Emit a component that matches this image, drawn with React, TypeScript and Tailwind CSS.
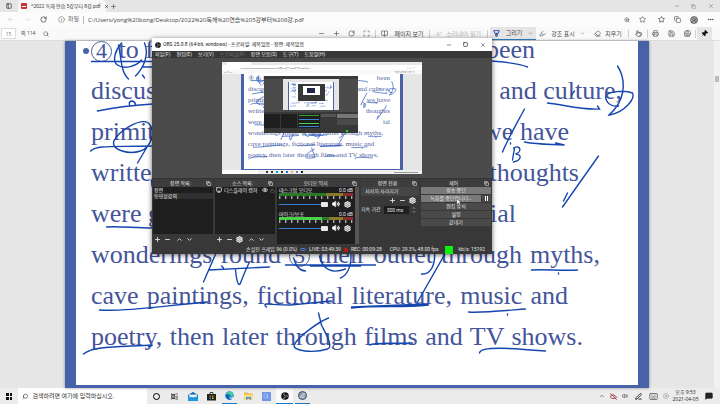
import type { ReactNode } from "react";
import {
  ArrowLeft,
  ArrowRight,
  BookOpen,
  ChevronDown,
  ChevronUp,
  CircleUserRound,
  CloudOff,
  Copy,
  Eraser,
  Eye,
  Highlighter,
  Info,
  Keyboard,
  Lock,
  MessageSquareText,
  Minus,
  Monitor,
  MoreHorizontal,
  PanelLeft,
  PenLine,
  Pin,
  Plus,
  Pointer,
  Printer,
  RotateCw,
  Save,
  SaveAll,
  Scan,
  Search,
  Settings,
  Square,
  Star,
  Volume2,
  X,
  XCircle,
  ZoomIn,
} from "lucide-react";

// Each line keeps the words on the left and right of the page
type Line = { left: ReactNode; right?: string; width: string; mini: string };

const Circled = ({ n }: { n: string }) => (
  <span className="inline-flex size-[21px] items-center justify-center rounded-full border border-[#4a5c9c] text-[22px] leading-none">
    {n}
  </span>
);

const LINES: Line[] = [
  {
    left: (
      <>
        <Circled n="4" /> to f
      </>
    ),
    right: "been",
    width: "w-[444px]",
    mini: "④ to f",
  },
  { left: "discus", right: "and culture,", width: "w-[531px]", mini: "discus" },
  { left: "primit", right: "we have", width: "w-[478px]", mini: "primit" },
  { left: "writte", right: "thoughts", width: "w-[488px]", mini: "writte" },
  { left: "were g", right: "ial", width: "w-[425px]", mini: "were g" },
  {
    left: (
      <>
        wonderings found <Circled n="5" /> their outlet through myths,
      </>
    ),
    width: "w-[509px]",
    mini: "wonderings found ⑤ their outlet through myths,",
  },
  {
    left: "cave paintings, fictional literature, music and",
    width: "w-[477px]",
    mini: "cave paintings, fictional literature, music and",
  },
  {
    left: "poetry, then later through films and TV shows.",
    width: "w-[492px]",
    mini: "poetry, then later through films and TV shows.",
  },
];

const STROKES = [
  "M91 61.5H152M142 67h10",
  "M121 43C115 50 111 61 117 65C124 70 136 66 141 60",
  "M118 45C121 58 120 72 128 79",
  "M144 43C149 55 143 68 135 76M142 75l2 3",
  "M97 111C115 107 135 105 152 104M129 105q-1-4 3-4q3 1 3 4",
  "M90 151C97 145 110 147 152 146",
  "M113 142C118 130 140 118 148 123C156 132 150 148 140 151C128 155 112 150 113 142M152 138L137 163",
  "M151 180q0 6 2 10M106 227C115 226 135 228 152 228",
  "M203 282L216 252M208 270L269 267M221 266l2 2M235 270C236 280 238 288 240 283C243 275 246 268 249 262",
  "M285 265H375M310 266h50M293 258C296 268 300 271 305 271",
  "M319 256C322 270 332 274 345 269M350 252C352 262 348 275 340 278",
  "M99 310C125 312 160 306 207 302",
  "M266 307C261 302 268 305 290 305L331 301",
  "M351 308C380 305 400 308 428 305M351 307L427 304M445 253L417 302M434 252C435 265 430 275 421 274",
  "M83 354C92 346 115 347 152 345l-4 2",
  "M318 313L321 325C326 335 333 347 327 349C315 353 290 352 294 344C300 335 318 322 328 318",
  "M531 270C545 269 560 271 577 270M558 273v1",
  "M468 312C480 313 500 311 525 309M507 314v1",
  "M369 345C375 342 390 344 412 343",
  "M479 353C480 346 510 348 545 351",
  "M490 61C505 62 520 64 527 67",
  "M547 103C565 105 580 110 599 109l-2-3M571 95l3-4",
  "M617 66C625 78 625 95 615 108C610 115 606 116 609 115C625 112 635 98 632 93C625 90 606 91 605 97C606 104 612 107 618 106",
  "M524 109C516 124 508 138 502 152M510 143v1",
  "M514 148L512 160M513 148C520 144 522 152 515 154C521 154 522 160 513 162",
  "M524 142C540 145 550 144 564 145l-9-2",
  "M598 156L562 207M567 193L563 201",
];

const Strokes = ({ weight = 1.4 }: { weight?: number }) => (
  <svg
    viewBox="65 41 583 347"
    className="pointer-events-none absolute inset-0 h-full w-full"
    fill="none"
    stroke="#1546b0"
    strokeWidth={weight}
    strokeLinecap="round"
    aria-hidden="true"
  >
    {STROKES.map((d) => (
      <path key={d} d={d} />
    ))}
  </svg>
);

const EdgeLogo = ({ className }: { className: string }) => (
  <svg viewBox="0 0 20 20" className={className} aria-hidden="true">
    <circle cx="10" cy="10" r="9.5" fill="#1478c8" />
    <path d="M1 9C2 2 12-2 17 4c4 5 2 9-3 9-3 0-2-1-2-3 0-4-8-5-11-1z" fill="#45cda0" />
    <path d="M7 10c-2 5 3 9 9 7-7 5-15-1-13-7 1-2 3-2 4 0z" fill="#0c56a5" />
    <path d="M8 10c-1 3 2 6 6 5 3-1 5-3 5-3l-1 4c-5 3-11 0-10-6z" fill="#fff" />
  </svg>
);

const ObsLogo = ({ className }: { className: string }) => (
  <svg viewBox="0 0 20 20" className={className} aria-hidden="true">
    <circle cx="10" cy="10" r="9.5" fill="#151515" />
    <g fill="none" stroke="#ddd" strokeWidth="1.6">
      <path d="M10 9C6 8 6 4 9 3M11 10c3-3 6-1 6 2M10 11c1 4-2 6-5 4" />
    </g>
  </svg>
);

const Divider = () => <span className="h-2 w-px bg-[#cfcfcf]" />;

const BrowserTop = () => (
  <header className="text-[#444]">
    <div className="flex h-3 items-center bg-[#e5e5e5]">
      <button aria-label="탭 작업" className="flex w-[18px] justify-center">
        <PanelLeft className="size-[6px]" strokeWidth={3} />
      </button>
      <div className="flex h-full w-[88px] items-center gap-1 rounded-t-sm bg-[#f8f8f8] pl-[3px]">
        <span className="flex h-[6px] w-[6px] shrink-0 items-center justify-center rounded-[1px] bg-[#c9303a]">
          <span className="h-px w-[4px] bg-white" />
        </span>
        <span className="font-[Roboto,'Noto_Sans_CJK_KR',sans-serif] text-[5px] leading-none whitespace-nowrap">
          *2022 독해 연습 5강부터 8강.pdf
        </span>
        <button aria-label="탭 닫기" className="mr-px ml-auto">
          <X className="size-[5px]" strokeWidth={3} />
        </button>
      </div>
      <button aria-label="새 탭" className="ml-1">
        <Plus className="size-[7px]" />
      </button>
      <div className="ml-auto flex w-[52px] items-center justify-around text-[#777]">
        <button aria-label="최소화"><Minus className="size-[6px]" /></button>
        <button aria-label="이전 크기로"><Copy className="size-[5px]" /></button>
        <button aria-label="닫기"><X className="size-[6px]" /></button>
      </div>
    </div>

    <div className="flex h-[15px] items-center bg-[#fcfcfc] pr-[6px]">
      <div className="flex w-[53px] items-center justify-between pr-[6px] pl-[7px]">
        <ArrowLeft className="size-[7px] text-[#ccc]" />
        <ArrowRight className="size-[7px] text-[#ddd]" />
        <button aria-label="새로 고침">
          <RotateCw className="size-[7px]" strokeWidth={2.5} />
        </button>
      </div>
      <Info className="ml-[5px] size-[7px] text-[#777]" />
      <label htmlFor="address" className="ml-[3px] text-[6px] text-[#666]">파일</label>
      <span className="mx-1 h-2 w-px bg-[#bbb]" />
      <input
        id="address"
        className="min-w-0 flex-1 bg-transparent text-[6px] leading-[10px] outline-none"
        defaultValue="C:/Users/yong%20bong/Desktop/2022%20독해%20연습%205강부터%208강.pdf"
      />
      <div className="flex items-center gap-[9px]">
        <ZoomIn className="size-[6px]" />
        <Star className="size-[7px]" />
        <Star className="ml-[3px] size-[7px]" strokeWidth={2.5} />
        <Copy className="size-[7px]" />
        <CircleUserRound className="size-[8px] rounded-full bg-[#bbb]" />
        <button aria-label="설정 및 기타">
          <MoreHorizontal className="size-[7px]" strokeWidth={3} />
        </button>
      </div>
    </div>

    <div className="flex h-[14px] items-center border-b border-[#ddd] bg-[#f9f9f9] pr-2 text-[6px] leading-none">
      <input
        id="page"
        className="ml-px h-[11px] w-[15px] border border-[#ddd] bg-white text-center text-[5px] text-[#777] outline-none"
        defaultValue="15"
      />
      <label htmlFor="page" className="ml-[5px] text-[5px]">의 114</label>
      <button aria-label="찾기" className="ml-2">
        <Search className="size-[6px]" />
      </button>

      <div className="ml-auto flex h-full items-center whitespace-nowrap">
        <div className="flex items-center gap-2 pr-[5px]">
          <button aria-label="축소"><Minus className="size-[7px]" /></button>
          <button aria-label="확대"><Plus className="size-[7px]" /></button>
          <button aria-label="회전"><RotateCw className="size-[7px]" /></button>
          <button aria-label="페이지에 맞춤"><Scan className="size-[7px]" /></button>
        </div>
        <Divider />
        <button className="flex w-[53px] items-center justify-center gap-[6px]">
          <BookOpen className="size-[7px]" />
          페이지 보기
        </button>
        <Divider />
        <button className="flex w-[57px] items-center justify-center gap-1 text-[#bbb]">
          <span>A&quot;</span>
          소리내어 읽기
        </button>
        <Divider />
        <button className="ml-[2px] flex h-full w-[46px] items-center justify-around border-b border-[#2b7fc4] bg-[#e5e5e5]">
          <svg viewBox="0 0 10 10" className="size-[7px]" aria-hidden="true">
            <path d="M1 1h8L6 7v2H4V7z" fill="#fff" stroke="#26479c" strokeWidth="1.4" />
            <path d="M3 4h4L5 8z" fill="#26479c" />
          </svg>
          그리기
          <ChevronDown className="size-[5px]" />
        </button>
        <button className="flex w-[52px] items-center justify-around">
          <Highlighter className="size-[7px]" />
          강조 표시
          <ChevronDown className="size-[5px]" />
        </button>
        <button className="flex w-[40px] items-center justify-center gap-1">
          <Eraser className="size-[7px]" />
          지우기
        </button>
        <Divider />
        <button aria-label="손 도구" className="flex w-[18px] justify-center">
          <Pointer className="size-[7px]" />
        </button>
        <Divider />
        <div className="flex w-[47px] items-center justify-around">
          <button aria-label="인쇄"><Printer className="size-[7px]" /></button>
          <button aria-label="저장"><Save className="size-[7px]" /></button>
          <button aria-label="다른 이름으로 저장"><SaveAll className="size-[7px]" /></button>
        </div>
        <Divider />
        <button aria-label="도구 모음 고정" className="ml-px flex h-full w-[15px] items-center justify-center bg-[#e5e5e5]">
          <Pin className="size-[7px] rotate-45 fill-black text-black" />
        </button>
      </div>
    </div>
  </header>
);

const DockTitle = ({ children }: { children: ReactNode }) => (
  <h2 className="flex h-[8px] items-center bg-[#3d3d3d] px-[2px] text-[5px] leading-none">
    <span className="flex-1 text-center">{children}</span>
    <Copy className="size-[5px]" strokeWidth={3} />
  </h2>
);

const ListTools = ({ withGear = false }: { withGear?: boolean }) => (
  <div className="flex h-[11px] items-center gap-[3px] pl-px">
    <button aria-label="추가"><Plus className="size-[7px]" strokeWidth={3} /></button>
    <button aria-label="제거"><Minus className="size-[7px]" strokeWidth={3} /></button>
    {withGear && (
      <button aria-label="속성"><Settings className="size-[7px]" strokeWidth={4} /></button>
    )}
    <button aria-label="위로" className="ml-[2px]"><ChevronUp className="size-[7px]" strokeWidth={3} /></button>
    <button aria-label="아래로"><ChevronDown className="size-[7px]" strokeWidth={3} /></button>
  </div>
);

const Channel = ({ name, live }: { name: string; live: boolean }) => (
  <div className="px-[2px]">
    <div className="flex h-[6px] items-center justify-between text-[5px] leading-none">
      <span>{name}</span>
      <span>0.0 dB</span>
    </div>
    <div className="flex h-[3px]">
      <span className={live ? "w-[58%] bg-[#4bd14b]" : "w-[64%] bg-[#287a28]"} />
      {live && <span className="w-[10%] bg-[#287a28]" />}
      <span className="flex-1 bg-[#8a7a28]" />
      <span className="w-[14%] bg-[#8e2b2b]" />
    </div>
    <div className="flex h-[4px] justify-between">
      {[60, 55, 50, 45, 40, 35, 30, 25, 20, 15, 10, 5, 0].map((db) => (
        <span key={db} className="h-[3px] w-[2px] border-l border-[#aaa] bg-[#555]" />
      ))}
    </div>
    <div className="flex h-[8px] items-center gap-1 pr-[2px]">
      <input
        type="range"
        aria-label={name}
        defaultValue={100}
        className="h-[6px] w-full min-w-0 appearance-none bg-transparent [&::-webkit-slider-runnable-track]:h-px [&::-webkit-slider-runnable-track]:bg-[#3a82d8] [&::-webkit-slider-thumb]:-mt-[2px] [&::-webkit-slider-thumb]:h-[5px] [&::-webkit-slider-thumb]:w-[7px] [&::-webkit-slider-thumb]:appearance-none [&::-webkit-slider-thumb]:rounded-[1px] [&::-webkit-slider-thumb]:bg-[#e8e8e8]"
      />
      <button aria-label="음소거"><Volume2 className="size-[8px] fill-white" strokeWidth={3} /></button>
      <button aria-label="오디오 설정"><Settings className="size-[7px]" strokeWidth={4} /></button>
    </div>
  </div>
);

// Small copy of the captured display, with the capture window repeated inside
const Preview = () => (
  <div className="relative flex h-[112px] w-[200px] flex-col overflow-hidden bg-[#e6e6e6]">
    <div className="h-[3px] bg-[#e8e8e8] px-[5px]">
      <div className="h-full w-6 bg-white" />
    </div>
    <div className="flex h-[5px] items-center gap-1 bg-white px-[6px] text-[2px] leading-none text-[#555]">
      <span className="flex-1 pl-3">C:/Users/yong%20bong/Desktop/2022%20독해%20연습%205강부터%208강.pdf</span>
      <span>☆ ☆ ◎ ⋯</span>
    </div>
    <div className="flex h-[4px] items-center bg-[#f9f9f9] pl-[2px] text-[2px] leading-none text-[#555]">
      <span className="flex-1">15 의 114</span>
      <span className="pr-2">그리기 강조 표시 지우기</span>
    </div>
    <div className="flex min-h-0 flex-1 justify-center">
      <div className="relative w-[162px] overflow-hidden border-x-[3px] border-b border-[#4762a9] bg-white">
        <div className="-mt-px ml-1 font-['Liberation_Serif',serif] text-[7px] leading-[11px] text-[#5566a5]">
          {LINES.map((line) => (
            <p key={line.mini} className={line.right ? "flex w-[142px] justify-between whitespace-nowrap" : "whitespace-nowrap"}>
              <span>{line.mini}</span>
              <span>{line.right}</span>
            </p>
          ))}
        </div>
        <Strokes weight={2.4} />
      </div>
    </div>
    <div className="flex h-[4px] items-center justify-between bg-[#efefef] pr-1">
      <span className="h-full w-9 bg-white" />
      <span className="mr-auto ml-2 flex gap-[3px]">
        <span className="size-[2px] bg-[#333]" />
        <span className="size-[2px] bg-[#333]" />
        <span className="size-[2px] bg-[#1690d8]" />
        <span className="size-[2px] bg-[#333]" />
        <span className="size-[2px] bg-[#1478c8]" />
        <span className="size-[2px] bg-[#e6b84a]" />
        <span className="size-[2px] bg-[#5a80d8]" />
        <span className="size-[2px] bg-[#151515]" />
      </span>
      <span className="h-px w-6 bg-[#999]" />
    </div>
    <div className="absolute top-[11px] left-[42px] flex h-[60px] w-[94px] flex-col bg-[#4b4b4b]">
      <div className="h-[3px] bg-white" />
      <div className="h-[3px] bg-[#3a3a3a]" />
      <div className="ml-[19px] flex h-[31px] w-[56px] justify-center bg-[#e6e6e6] pt-[3px]">
        <div className="relative flex w-[46px] justify-center border-x border-[#4762a9] bg-white">
          <Strokes weight={5} />
          <div className="relative mt-[2px] h-[17px] w-[27px] bg-[#383838] px-[5px] pt-[2px]">
            <div className="flex h-[9px] justify-center bg-white pt-[2px]">
              <span className="h-[5px] w-[8px] bg-[#22264a]" />
            </div>
          </div>
        </div>
      </div>
      <div className="mt-[2px] flex flex-1 gap-px bg-[#383838] pt-[2px]">
        <span className="h-[14px] w-[16px] bg-[#1e1e1e]" />
        <span className="h-[14px] w-[16px] bg-[#1e1e1e]" />
        <span className="flex h-[14px] w-[22px] flex-col gap-[3px] bg-[#1e1e1e] p-px">
          <span className="h-px bg-[#36a036]" />
          <span className="h-px bg-[#3a82d8]" />
          <span className="h-px bg-[#4bd14b]" />
          <span className="h-px bg-[#3a82d8]" />
        </span>
        <span className="h-[3px] w-[15px] bg-[#555]" />
        <span className="flex flex-1 flex-col gap-px">
          <span className="h-[4px] bg-[#777]" />
          <span className="h-[6px] bg-[#4a4a4a]" />
        </span>
      </div>
      <div className="flex h-[4px] items-center justify-end bg-[#383838] pr-[10px]">
        <span className="size-[2px] bg-[#0ef010]" />
      </div>
    </div>
  </div>
);

const MENU = ["파일(F)", "편집(E)", "보기(V)", "프로파일(P)", "장면 모음(S)", "도구(T)", "도움말(H)"];

const BTN = "h-[7px] w-full bg-[#4a4a4a] text-[5px] leading-none";
const BTN_ON = "h-[7px] w-full bg-[#797979] text-[5px] leading-none";

const ObsWindow = () => (
  <section
    aria-label="OBS"
    className="absolute top-[38px] left-[152px] flex w-[340px] flex-col bg-[#383838] font-[Roboto,'Noto_Sans_CJK_KR',sans-serif] text-[#e4e4e4] shadow-[0_1px_5px_rgba(0,0,0,0.6)]"
  >
    <div className="flex h-[13px] items-center bg-white pl-[3px] text-[#222]">
      <ObsLogo className="size-[6px]" />
      <h1 className="ml-[2px] text-[5px] leading-none whitespace-nowrap">
        OBS 25.0.8 (64-bit, windows) - 프로파일: 제목없음 - 장면: 제목없음
      </h1>
      <div className="ml-auto flex w-[52px] items-center justify-around">
        <button aria-label="최소화"><Minus className="size-[6px]" /></button>
        <button aria-label="최대화"><Square className="size-[5px]" strokeWidth={3} /></button>
        <button aria-label="닫기"><X className="size-[6px]" /></button>
      </div>
    </div>
    <nav className="flex h-[7px] items-center gap-[6px] pl-[3px] text-[5px] leading-none">
      {MENU.map((item) => (
        <button key={item} className={item === "프로파일(P)" ? "text-[#707070]" : ""}>
          {item}
        </button>
      ))}
    </nav>
    <div className="flex h-[120px] justify-center bg-[#4b4b4b] pt-1">
      <Preview />
    </div>

    <div className="flex gap-[2px] border-t border-[#333] px-px">
      <section className="w-[60px]">
        <DockTitle>장면 목록:</DockTitle>
        <ul className="h-[47px] bg-[#1e1e1e] text-[5px] leading-[6px]">
          <li className="pl-px">장면</li>
          <li className="bg-[#303030] pl-px">동영상강의</li>
        </ul>
        <ListTools />
      </section>
      <section className="w-[60px]">
        <DockTitle>소스 목록:</DockTitle>
        <ul className="h-[47px] bg-[#1e1e1e] text-[5px] leading-[6px]">
          <li className="flex items-center gap-[2px] pl-px whitespace-nowrap">
            <Monitor className="size-[6px] shrink-0" strokeWidth={3} />
            <span className="flex-1">디스플레이 캡쳐</span>
            <Eye className="size-[6px] shrink-0" strokeWidth={3} />
            <Lock className="size-[5px] shrink-0 text-[#777]" />
          </li>
        </ul>
        <ListTools withGear />
      </section>
      <section className="w-[82px]">
        <DockTitle>오디오 믹서</DockTitle>
        <div className="flex h-[57px] bg-[#1e1e1e]">
          <div className="flex min-w-0 flex-1 flex-col gap-[3px]">
            <Channel name="데스크탑 오디오" live={false} />
            <Channel name="마이크/보조" live />
          </div>
          <div className="w-1 bg-[#555]" />
        </div>
      </section>
      <section className="w-[58px]">
        <DockTitle>장면 전환</DockTitle>
        <select
          aria-label="장면 전환"
          className="block h-[9px] w-full appearance-none bg-[#454545] pl-[4px] text-[5px] leading-none"
        >
          <option>서서히 사라지기</option>
        </select>
        <div className="flex h-[9px] items-center justify-end gap-[3px] pr-[3px]">
          <button aria-label="추가"><Plus className="size-[7px]" strokeWidth={3} /></button>
          <button aria-label="제거"><Minus className="size-[7px]" strokeWidth={3} /></button>
          <button aria-label="속성"><Settings className="size-[7px]" strokeWidth={4} /></button>
        </div>
        <label className="flex h-[9px] items-center gap-[3px] pr-[2px] text-[5px] leading-none whitespace-nowrap">
          지속 기간
          <input className="h-[8px] w-[25px] bg-[#1e1e1e] pl-[3px] text-[5px]" defaultValue="300 ms" />
          <span className="flex flex-col">
            <ChevronUp className="size-[4px]" strokeWidth={3} />
            <ChevronDown className="size-[4px]" strokeWidth={3} />
          </span>
        </label>
      </section>
      <section className="flex-1">
        <DockTitle>제어</DockTitle>
        <div className="flex flex-col gap-px">
          <button className={BTN_ON}>방송 중단</button>
          <div className="flex gap-px">
            <button className={BTN_ON}>녹화를 중단합니다...</button>
            <button aria-label="일시 정지" className="flex w-[10px] items-center justify-center gap-px bg-[#4a4a4a]">
              <span className="h-[5px] w-px bg-white" />
              <span className="h-[5px] w-px bg-white" />
            </button>
          </div>
          <button className={BTN}>편집 방식</button>
          <button className={BTN}>설정</button>
          <button className={BTN}>끝내기</button>
        </div>
      </section>
    </div>

    <footer className="flex h-[9px] items-center justify-end pr-[7px] text-[5px] leading-none whitespace-nowrap">
      <span>손실된 프레임 96 (0.0%)</span>
      <span className="mx-[3px] h-[3px] w-[6px] rounded-full border border-[#4f7fe0]" />
      <span>LIVE: 03:49:39</span>
      <span className="mx-[3px] size-[4px] rounded-full bg-[#d80f0f]" />
      <span>REC: 00:09:28</span>
      <span className="ml-[8px]">CPU: 29.3%, 48.00 fps</span>
      <span className="mx-[6px] size-[8px] bg-[#0ef010]" />
      <span>kb/s: 15192</span>
    </footer>

    <svg viewBox="0 0 10 14" className="absolute top-[160px] left-[304px] h-[8px] w-[6px]" aria-hidden="true">
      <path d="M1 1v11l3-3 2 4 2-1-2-4h3z" fill="#fff" stroke="#222" strokeWidth="0.8" />
    </svg>
  </section>
);

const Taskbar = () => (
  <footer className="flex h-4 items-center bg-[#ececec] text-[#222]">
    <button aria-label="시작" className="grid w-[18px] grid-cols-2 justify-center gap-px px-[6px]">
      <span className="h-[3px] bg-[#111]" />
      <span className="h-[3px] bg-[#111]" />
      <span className="h-[3px] bg-[#111]" />
      <span className="h-[3px] bg-[#111]" />
    </button>
    <div className="flex h-full w-[129px] items-center gap-1 bg-white pl-1">
      <Search className="size-[7px] -scale-x-100" />
      <input
        aria-label="검색"
        className="w-full min-w-0 text-[6px] leading-[10px] outline-none placeholder:text-[#333]"
        placeholder="검색하려면 여기에 입력하십시오."
      />
    </div>
    <div className="flex h-full">
      <button aria-label="Cortana" className="flex w-[18px] items-center justify-center">
        <span className="size-[7px] rounded-full border border-black" />
      </button>
      <button aria-label="작업 보기" className="flex w-[18px] items-center justify-center">
        <svg viewBox="0 0 14 14" className="size-[7px]" fill="none" stroke="#222" strokeWidth="1.6" aria-hidden="true">
          <path d="M1 1v2h7V1M1 13v-2h7v2M1 5.5h7v3H1zM12 0v3M12 5v9" />
        </svg>
      </button>
      <button aria-label="메일" className="flex w-[19px] items-center justify-center">
        <svg viewBox="0 0 20 18" className="h-[9px] w-[10px]" aria-hidden="true">
          <path d="M0 6l10-6 10 6v12H0z" fill="#0b5fae" />
          <path d="M2 5h16v6H2z" fill="#e8f4fc" />
          <path d="M0 7l10 6 10-6v11H0z" fill="#1b98e0" />
        </svg>
      </button>
      <button aria-label="스토어" className="flex w-[18px] items-center justify-center">
        <svg viewBox="0 0 18 18" className="size-[9px]" aria-hidden="true">
          <path d="M6 4V1h6v3" fill="none" stroke="#222" strokeWidth="1.6" />
          <path d="M0 4h18v13H0z" fill="#222" />
          <path d="M5 7h3v3H5z" fill="#e2502b" />
          <path d="M10 7h3v3h-3z" fill="#7fba00" />
          <path d="M5 11h3v3H5z" fill="#1ca0e8" />
          <path d="M10 11h3v3h-3z" fill="#ffb900" />
        </svg>
      </button>
      <button aria-label="Edge" className="mx-[2px] flex w-[15px] items-center justify-center border-b border-[#1779c4]">
        <EdgeLogo className="size-[9px]" />
      </button>
      <button aria-label="파일 탐색기" className="flex w-[18px] items-center justify-center">
        <svg viewBox="0 0 18 16" className="h-[8px] w-[9px]" aria-hidden="true">
          <path d="M0 1h7l2 2h9v12H0z" fill="#e9b949" />
          <path d="M0 5h18v10H0z" fill="#fbdc82" />
          <path d="M4 10h10v5h-3v-2H7v2H4z" fill="#3d93d4" />
        </svg>
      </button>
      <button aria-label="문서" className="flex w-[18px] items-center justify-center">
        <span className="flex size-[9px] items-center justify-center bg-[#6f97e8]">
          <Search className="size-[6px] text-[#dbe6ff]" />
        </span>
      </button>
      <button aria-label="OBS Studio" className="ml-px flex w-[17px] items-center justify-center border-b border-[#1779c4] bg-[#fafafa]">
        <ObsLogo className="size-[8px]" />
      </button>
      <button aria-label="펜" className="ml-[2px] flex w-[15px] items-center justify-center border-b border-[#1779c4]">
        <span className="flex size-[9px] items-center justify-center rounded-full border border-[#445566] bg-[#8b9aa8]">
          <PenLine className="size-[5px] text-white" strokeWidth={3} />
        </span>
      </button>
    </div>
    <div className="ml-auto flex h-full items-center pr-[7px]">
      <div className="flex items-center gap-[5px]">
        <ChevronUp className="size-[6px]" />
        <CloudOff className="size-[7px] text-[#a3343c]" strokeWidth={3} />
        <Volume2 className="size-[6px]" />
        <PenLine className="ml-[2px] size-[7px]" strokeWidth={3} />
        <Keyboard className="ml-[2px] size-[9px] text-[#555]" />
        <XCircle className="size-[6px] text-[#888]" />
      </div>
      <time dateTime="2021-04-05T21:53" className="ml-[3px] w-[27px] text-center text-[5px] leading-[7px] whitespace-nowrap">
        오후 9:53
        <br />
        2021-04-05
      </time>
      <button aria-label="알림" className="ml-[6px]">
        <MessageSquareText className="size-[8px] fill-[#222]" />
      </button>
    </div>
  </footer>
);

const App = () => (
  <div className="relative flex min-h-screen flex-col overflow-hidden bg-[#e6e6e6] font-['Open_Sans','Noto_Sans_CJK_KR',sans-serif]">
    <BrowserTop />
    <main className="flex flex-1">
      <div className="flex flex-1 justify-center">
        <article className="relative w-full max-w-[584px] overflow-hidden border-x-[11px] border-b-[3px] border-[#4762a9] bg-white shadow-[0_0_3px_rgba(0,0,0,0.4)]">
          <div className="-mt-[12px] ml-[15px] font-['Liberation_Serif',serif] text-[26px] leading-[41px] text-[#44559a]">
            {LINES.map((line, i) => (
              <p key={line.mini} className={`flex h-[41px] justify-between whitespace-nowrap ${line.width}`}>
                {line.right ? (
                  <>
                    <span>{line.left}</span>
                    <span>{line.right}</span>
                  </>
                ) : (
                  <span className="w-full whitespace-normal [text-align-last:justify]">{line.left}</span>
                )}
                {i === 0 && <span className="absolute top-[7px] left-[7px] size-[6px] rounded-full bg-[#4762a9]" />}
              </p>
            ))}
          </div>
          <div className="absolute -inset-x-[11px] top-0 -bottom-[3px]">
            <Strokes />
          </div>
        </article>
      </div>
      <div className="w-[6px] bg-[#f1f1f1] pt-[35px]">
        <div className="mx-px h-[6px] bg-[#bcbcbc]" />
      </div>
    </main>
    <Taskbar />
    <ObsWindow />
  </div>
);

export default App;
